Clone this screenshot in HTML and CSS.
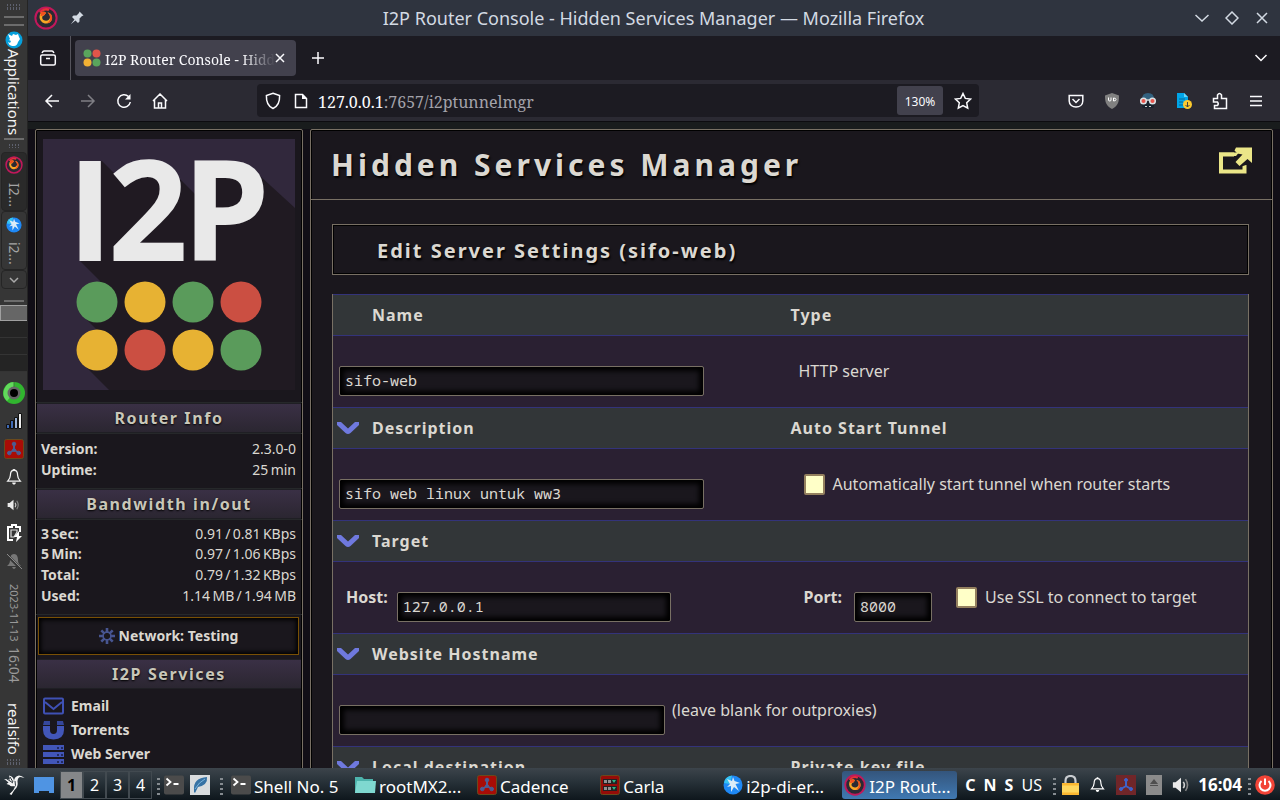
FILE: index.html
```html
<!DOCTYPE html>
<html lang="en">
<head>
<meta charset="utf-8">
<title>I2P Router Console - Hidden Services Manager</title>
<link rel="stylesheet" href="styles.css">
</head>
<body>
<svg class="defs" aria-hidden="true">
  <symbol id="fox" viewBox="0 0 24 24">
    <circle cx="12" cy="12" r="10.6" fill="#2b2a33" stroke="#c2185b" stroke-width="2"/>
    <path d="M6 6.5C8 3.500 12 2.500 15 4" fill="none" stroke="#e8303a" stroke-width="2.400"/>
    <path d="M7 6.500c2-1 4-1 5 .5l-2 2.500c-2 0-2.500 3-.5 4.500 3 2 6.500 0 6.500-3 0-2-1-3.500-2.500-4.500 3.500.5 5 3.500 4.500 6.500-1 5-7.500 6-10.500 2.500C5 13 5 9.500 7 6.500z" fill="#f9a825"/>
    <path d="M13.500 6.500c3.500.5 5 3.500 4.500 6.500-.5 2.500-2.500 4-5 4.300 2.500-2 3.800-3.800 3-6.300-.4-2-1.200-3.500-2.500-4.500zM7 6.500c2-1 4-1 5 .5l-2 2.200-3.500 1z" fill="#f4511e"/>
  </symbol>
  <symbol id="bluebird" viewBox="0 0 20 20">
    <circle cx="10" cy="10" r="9.500" fill="#1e88f5"/>
    <path d="M1 8a9 9 0 0 1 8-7.400L7 9z" fill="#35c3f3"/>
    <path d="M4 4l5 2 1-4 1.500 4L17 8l-4.500 1 3.500 7-5-4-3 5V11l-4 1 3-3z" fill="#dcecf7"/>
  </symbol>
  <symbol id="cadence" viewBox="0 0 20 20">
    <rect x=".5" y=".5" width="19" height="19" rx="2" fill="#a80c06" stroke="#6b4a1c"/>
    <g fill="#4d5b91" stroke="#4d5b91"><circle cx="10" cy="5" r="1.800"/><circle cx="5.300" cy="14" r="1.800"/><circle cx="14.700" cy="14" r="1.800"/><circle cx="10" cy="11" r="1.500"/><path d="M10 5v6l-5 3m5-3l5 3" stroke-width="2" fill="none"/></g>
  </symbol>
  <symbol id="bell" viewBox="0 0 20 20">
    <path d="M10 2.500c-3.500 0-4 3-4 5.500 0 3-1.200 4.500-3 6.500h14c-1.800-2-3-3.500-3-6.500 0-2.500-.5-5.500-4-5.500z" fill="none" stroke="currentColor" stroke-width="1.400"/>
    <path d="M8 16h4c0 3-4 3-4 0zM9 1h2v2H9z" fill="currentColor"/>
  </symbol>
  <symbol id="speaker" viewBox="0 0 20 20">
    <path d="M1 7h3l6-5v16l-6-5H1z" fill="#e9e9e9"/>
    <path d="M12.500 6.500q2.500 3.500 0 7" fill="none" stroke="#cfcfcf" stroke-width="1.800"/>
    <path d="M15 3.500q4.500 6.500 0 13" fill="none" stroke="#858585" stroke-width="1.800"/>
  </symbol>
  <symbol id="terminal" viewBox="0 0 20 20">
    <rect width="20" height="19" rx="2" y=".5" fill="#4b4b4b"/>
    <path d="M2.500 3.500L6.500 7l-4 3.500M9.500 9h5" fill="none" stroke="#fff" stroke-width="1.800"/>
  </symbol>
  <symbol id="chevron" viewBox="0 0 22 12">
    <path d="M0 0h4l7 6.500L18 0h4v3l-8.500 8q-2.500 2-5 0L0 3z" fill="#6f79de"/>
  </symbol>
</svg>

<div class="desktop">
  <aside class="dock">
    <span class="grip"></span>
    <span class="line"></span>
    <span class="line"></span>
    <button class="apps" type="button">
      <svg width="18" height="18" viewBox="0 0 18 18"><circle cx="9" cy="9" r="8.500" fill="#06a0dc"/><path d="M3 3l4 2 1-2 3 1 2-1 1 3 1 2-2 3q-1 4-4 4-4 0-5-2l-1-2 2 1 1-2-2-1 1-1z" fill="#fff"/></svg>
      <span>Applications</span>
    </button>
    <span class="line"></span>
    <span class="grip small"></span>
    <button class="dock-task active" type="button"><svg width="18" height="18"><use href="#fox"/></svg><span>I2...</span></button>
    <button class="dock-task" type="button"><svg width="16" height="16"><use href="#bluebird"/></svg><span>i2...</span></button>
    <button class="dock-more" type="button" aria-label="More windows"><svg width="10" height="8" viewBox="0 0 10 8"><path d="M1 2l4 4 4-4" fill="none" stroke="#aaa" stroke-width="1.500"/></svg></button>
    <span class="line pager-line"></span>
    <div class="dock-pager"><i class="on"></i><i></i><i></i><i></i></div>
    <div class="tray-v">
      <span><svg width="24" height="24" viewBox="0 0 24 24"><circle cx="12" cy="12" r="11" fill="#31b52f"/><path d="M12 1a11 11 0 0 0-7 19l7-8z" fill="#62d95c"/><circle cx="12" cy="12" r="6.500" fill="#666"/><circle cx="12" cy="12" r="4" fill="#000"/><path d="M12 1v5" stroke="#3e7b38"/></svg></span>
      <span><svg width="18" height="18" viewBox="0 0 18 18" stroke="#111"><path d="M1.500 12.500h3v4h-3zM5.500 8.500h3v8h-3z" fill="#3f6ab5"/><path d="M9.500 5.500h3v11h-3z" fill="#9db3d6"/><path d="M13.500 1.500h3v15h-3z" fill="#eee"/></svg></span>
      <span><svg width="20" height="20"><use href="#cadence"/></svg></span>
      <span><svg width="18" height="18"><use href="#bell"/></svg></span>
      <span><svg width="13" height="14"><use href="#speaker"/></svg></span>
      <span><svg width="18" height="18" viewBox="0 0 18 18"><path d="M6 1h5v2h4v5M8 16H3V3h5" fill="none" stroke="#fff" stroke-width="2"/><path d="M6 6h6v2l-3 5H6z" fill="none" stroke="#ddd" stroke-width="1.200"/><path d="M14 7l-5 6h3l-1 5 6-6h-3z" fill="#fff"/></svg></span>
      <span class="muted"><svg width="18" height="18" viewBox="0 0 18 18"><path d="M9 2C6 2 5 5 5 8s-1 4-3 6h14c-2-2-3-3-3-6s-1-6-4-6zM7 15h4q-2 4-4 0z" fill="#777"/><path d="M1 2l15 15" stroke="#363636" stroke-width="3"/><path d="M2 2l15 15" stroke="#8a8a8a"/></svg></span>
    </div>
    <span class="v-date">2023-11-13</span>
    <span class="v-time">16:04</span>
    <span class="v-user">realsifo</span>
    <span class="grip"></span>
  </aside>

  <div class="window">
    <header class="titlebar">
      <svg width="24" height="24"><use href="#fox"/></svg>
      <svg class="pin" width="14" height="14" viewBox="0 0 14 14"><path d="M9.500.5l4 4-1.500.5-2.500 2.500v3L8 12 5.500 9.500.8 13.200 4.500 8.500 2 6l1.500-1.500h3L9 2z" fill="#d3dae3"/></svg>
      <h1>I2P Router Console - Hidden Services Manager — Mozilla Firefox</h1>
      <div class="win-buttons">
        <button type="button" aria-label="Minimize"><svg width="14" height="14" viewBox="0 0 14 14"><path d="M0.500 4L7 10l6.500-6"/></svg></button>
        <button type="button" aria-label="Maximize"><svg width="14" height="14" viewBox="0 0 14 14"><path d="M7 1l6 6-6 6-6-6z"/></svg></button>
        <button type="button" aria-label="Close"><svg width="14" height="14" viewBox="0 0 14 14"><path d="M2 2l10 10M12 2L2 12"/></svg></button>
      </div>
    </header>

    <div class="tabs">
      <button class="view" type="button" aria-label="Recent browsing"><svg width="18" height="18" viewBox="0 0 18 18"><rect x="1.700" y="6" width="14.600" height="10" rx="1.500"/><path d="M3 4q1-2 2-2h8q1 0 2 2M7 9.500h4"/></svg></button>
      <div class="tab">
        <svg width="18" height="18" viewBox="0 0 18 18"><circle cx="4.500" cy="4.500" r="4" fill="#5aa55c"/><circle cx="13.500" cy="4.500" r="4" fill="#e0554a"/><circle cx="4.500" cy="13.500" r="4" fill="#f2b134"/><circle cx="13.500" cy="13.500" r="4" fill="#5aa55c"/></svg>
        <span class="tab-title">I2P Router Console - Hidden</span>
        <button type="button" aria-label="Close tab"><svg width="10" height="10" viewBox="0 0 10 10"><path d="M1 1l8 8M9 1L1 9"/></svg></button>
      </div>
      <button class="new-tab" type="button" aria-label="New tab"><svg width="14" height="14" viewBox="0 0 14 14"><path d="M7 1v12M1 7h12"/></svg></button>
      <button class="all-tabs" type="button" aria-label="List all tabs"><svg width="14" height="14" viewBox="0 0 14 14"><path d="M1.500 4L7 9.500 12.500 4"/></svg></button>
    </div>

    <nav class="toolbar">
      <div class="nav-buttons">
        <button type="button" aria-label="Back"><svg width="16" height="16" viewBox="0 0 16 16"><path d="M15 8H2m6-6L2 8l6 6"/></svg></button>
        <button type="button" aria-label="Forward" disabled><svg width="16" height="16" viewBox="0 0 16 16"><path d="M1 8h13M8 2l6 6-6 6"/></svg></button>
        <button type="button" aria-label="Reload"><svg width="16" height="16" viewBox="0 0 16 16"><path d="M12.500 3.500A6.300 6.300 0 1 0 14.300 9"/><path d="M14.500 1v5.500H9z" fill="#fbfbfe" stroke="none"/></svg></button>
        <button type="button" aria-label="Home"><svg width="16" height="16" viewBox="0 0 16 16"><path d="M1 8l7-7 7 7M2.500 7v8h11V7M6.500 15v-5h3v5"/></svg></button>
      </div>
      <div class="urlbar">
        <svg width="16" height="18" viewBox="0 0 16 18"><path d="M8 1.200L14.600 3.500Q15 13.500 8 16.500 1 13.500 1.400 3.500z"/></svg>
        <svg width="14" height="16" viewBox="0 0 14 16"><path d="M1.500 1.500h7l4 4v9h-11z"/><path d="M8 1v5h5z" fill="#fbfbfe" stroke="none"/></svg>
        <span class="url"><b>127.0.0.1</b>:7657/i2ptunnelmgr</span>
        <button class="zoom" type="button">130%</button>
        <button type="button" aria-label="Bookmark this page"><svg width="18" height="18" viewBox="0 0 18 18"><path d="M9 1.500l2.300 4.900 5.200.7-3.800 3.700 1 5.300L9 13.500l-4.700 2.600 1-5.300L1.500 7.100l5.200-.7z"/></svg></button>
      </div>
      <div class="extensions">
        <button type="button" aria-label="Pocket"><svg width="16" height="16" viewBox="0 0 16 16"><path d="M1.200 2.500h13.600V8c0 8-13.600 8-13.600 0zM4.500 6L8 9.500 11.500 6"/></svg></button>
        <button type="button" aria-label="uBlock Origin"><svg width="16" height="18" viewBox="0 0 16 18"><path d="M8 1l7 2.500c0 7-1 10-7 13.500C2 13.500 1 10.500 1 3.500z" fill="#808080" stroke="none"/><path d="M4.500 5.500V8q0 1 1.300 1T7 8V5.500M9.500 6v3q2.500 0 2.500-1.500T9.500 6" stroke="#fff" stroke-width="1"/></svg></button>
        <button type="button" aria-label="Privacy mask"><svg width="18" height="18" viewBox="0 0 18 18"><path d="M3 7q0-6 6-6t6 6z" fill="#32617f" stroke="none"/><path d="M3 10h12v4q0 2-2 2H5q-2 0-2-2z" fill="#17222d" stroke="none"/><g fill="#e8554d" stroke="#d9e2e5"><circle cx="4.500" cy="9" r="2.800"/><circle cx="13.500" cy="9" r="2.800"/></g><path d="M7 8h4" stroke="#d9e2e5"/><path d="M6 14h2v1H6zm4 0h2v1h-2z" fill="#ccc" stroke="none"/></svg></button>
        <button type="button" aria-label="Download document"><svg width="18" height="18" viewBox="0 0 18 18"><path d="M2 1h7l4 4v11H2z" fill="#00a5e8" stroke="none"/><path d="M9 1v4h4z" fill="#67d4f8" stroke="none"/><path d="M4 7h6M4 10h4M4 13h4" stroke="#086994" stroke-width="1"/><circle cx="12.500" cy="12.500" r="4.500" fill="#fdca2d" stroke="none"/><path d="M12.500 10v5m-2-2l2 2 2-2" stroke="#444" stroke-width="1"/></svg></button>
        <button type="button" aria-label="Extensions"><svg width="16" height="18" viewBox="0 0 16 18"><path d="M1.500 6.500h4V3q2-3 4 0v3.500h5v10h-12v-3h3q1.500-1.700 0-3.500h-4z"/></svg></button>
        <button type="button" aria-label="Menu"><svg width="14" height="14" viewBox="0 0 14 14"><path d="M1 2.500h12M1 7h12M1 11.500h12"/></svg></button>
      </div>
    </nav>

    <div class="page">
      <aside class="sidebar">
        <a class="logo" href="#home" aria-label="I2P">
          <svg viewBox="0 0 252 251">
            <rect width="252" height="251" fill="#31283c"/>
            <path d="M37 122V22h22l14 14 27-11 30 8 22 22 13-25 51 6 36 33v182H66L40 225l14-14 3-17-17-17 14-14 3-21z" fill="#201a22"/>
            <text y="122" class="logo-text"><tspan x="24">I</tspan><tspan x="65">2</tspan><tspan x="139">P</tspan></text>
            <g fill="#5a9b5b"><circle cx="54" cy="163" r="20.500"/><circle cx="150" cy="163" r="20.500"/><circle cx="198" cy="211" r="20.500"/></g>
            <g fill="#e7b233"><circle cx="102" cy="163" r="20.500"/><circle cx="54" cy="211" r="20.500"/><circle cx="150" cy="211" r="20.500"/></g>
            <g fill="#cb4f42"><circle cx="198" cy="163" r="20.500"/><circle cx="102" cy="211" r="20.500"/></g>
          </svg>
        </a>
        <h3>Router Info</h3>
        <dl>
          <div><dt>Version:</dt><dd>2.3.0-0</dd></div>
          <div><dt>Uptime:</dt><dd>25&thinsp;min</dd></div>
        </dl>
        <h3>Bandwidth in/out</h3>
        <dl class="rates">
          <div><dt>3&thinsp;Sec:</dt><dd>0.91&thinsp;/&thinsp;0.81&thinsp;KBps</dd></div>
          <div><dt>5&thinsp;Min:</dt><dd>0.97&thinsp;/&thinsp;1.06&thinsp;KBps</dd></div>
          <div><dt>Total:</dt><dd>0.79&thinsp;/&thinsp;1.32&thinsp;KBps</dd></div>
          <div><dt>Used:</dt><dd>1.14&thinsp;MB&thinsp;/&thinsp;1.94&thinsp;MB</dd></div>
        </dl>
        <p class="network">
          <svg width="16" height="16" viewBox="0 0 16 16"><path d="M8 0v5M8 11v5M0 8h5M11 8h5M2.300 2.300l3.500 3.500M10.200 10.200l3.500 3.500M13.700 2.300l-3.500 3.500M5.800 10.200l-3.500 3.500" stroke="#475590" stroke-width="2.600"/><circle cx="8" cy="8" r="4" fill="none" stroke="#475590"/></svg>
          Network: Testing
        </p>
        <h3>I2P Services</h3>
        <ul class="services">
          <li><a href="#email"><svg width="21" height="18" viewBox="0 0 21 18"><rect x="1" y="1.500" width="19" height="15" rx="1" fill="none" stroke="#3f51b5" stroke-width="2"/><path d="M2 5l8.500 7L19 5" fill="none" stroke="#3f51b5" stroke-width="2"/></svg>Email</a></li>
          <li><a href="#torrents"><svg width="21" height="20" viewBox="0 0 21 20"><path d="M0 6h7v4q0 4 3.500 4t3.500-4V6h7v4q0 9-10.500 9.500Q0 19 0 10z" fill="#4256b9"/><path d="M1 1h6v4H0zM14 1h6l1 4h-7z" fill="#35479c"/></svg>Torrents</a></li>
          <li><a href="#web"><svg width="21" height="19" viewBox="0 0 21 19"><path d="M0 0h21v5H0zM0 7h21v5H0zM0 14h21v5H0z" fill="#4256b9"/><path d="M14 2h2v2h-2zm4 0h2v2h-2zm-4 7h2v2h-2zm4 0h2v2h-2zm-4 7h2v2h-2zm4 0h2v2h-2z" fill="#222b62"/></svg>Web Server</a></li>
        </ul>
      </aside>

      <main class="panel">
        <header class="panel-head">
          <h2>Hidden Services Manager</h2>
          <a href="#popout" aria-label="Open in new tab"><svg width="34" height="28" viewBox="0 0 34 28"><path d="M2 7.500h23.500v17H2z" fill="none" stroke="#ebe688" stroke-width="4"/><path d="M15 0h19v19l-7-1-6 2-6-3z" fill="#1a171d"/><path d="M0 5.500h20l-3 3.500H4v14h-4z" fill="#ebe688"/><path d="M17 0.500h16v15.500l-4.500-4-8 7-4-4 7-7.500-5-1-3-3z" fill="#ebe688"/></svg></a>
        </header>
        <form class="edit" onsubmit="return false">
          <h3 class="edit-title">Edit Server Settings (sifo-web)</h3>
          <table>
            <tr><th><label for="name">Name</label></th><th>Type</th></tr>
            <tr>
              <td><div class="field"><input id="name" class="text wide" type="text" value="sifo-web"></div></td>
              <td><div class="field plain"><span>HTTP server</span></div></td>
            </tr>
            <tr><th><svg width="22" height="12"><use href="#chevron"/></svg><label for="desc">Description</label></th><th>Auto Start Tunnel</th></tr>
            <tr>
              <td><div class="field"><input id="desc" class="text wide" type="text" value="sifo web linux untuk ww3"></div></td>
              <td><div class="field check"><input id="auto" type="checkbox"><label for="auto">Automatically start tunnel when router starts</label></div></td>
            </tr>
            <tr><th colspan="2"><svg width="22" height="12"><use href="#chevron"/></svg>Target</th></tr>
            <tr>
              <td><div class="field target"><label for="host">Host:</label><input id="host" class="text host" type="text" value="127.0.0.1"></div></td>
              <td><div class="field check"><label class="strong" for="port">Port:</label><input id="port" class="text port" type="text" value="8000"><input id="ssl" type="checkbox"><label for="ssl">Use SSL to connect to target</label></div></td>
            </tr>
            <tr><th colspan="2"><svg width="22" height="12"><use href="#chevron"/></svg><label for="site">Website Hostname</label></th></tr>
            <tr>
              <td colspan="2"><div class="field"><input id="site" class="text site" type="text" value=""><span>(leave blank for outproxies)</span></div></td>
            </tr>
            <tr><th><svg width="22" height="12"><use href="#chevron"/></svg>Local destination</th><th>Private key file</th></tr>
          </table>
        </form>
      </main>
    </div>
  </div>

  <footer class="taskbar">
    <div class="launch">
      <button type="button" aria-label="Start menu"><svg width="22" height="22" viewBox="0 0 22 22"><path d="M1 5l6 .5L6 1.500q5 1 5 6 0-5 5-6 3 0 5.500 2.500l-4-1q-2.500 0-3 4 1 6-3 9-1.500 2-3 5l-2-1 3-3q3-3 1-5-3 1-4-1l-3-1 2-1.500-3-2.500z" fill="#f4f4f4"/><path d="M4 5l6 4M7 3l3 5M12 7q2 5-2 8" stroke="#29333b" fill="none"/></svg></button>
      <button type="button" aria-label="Show desktop"><svg width="20" height="18" viewBox="0 0 20 18"><path d="M0 1h20v16h-5v-2H5v2H0z" fill="#4f94e3"/></svg></button>
    </div>
    <div class="pager"><button class="on" type="button">1</button><button type="button">2</button><button type="button">3</button><button type="button">4</button></div>
    <span class="dots"></span>
    <button type="button" aria-label="Terminal"><svg width="20" height="20"><use href="#terminal"/></svg></button>
    <button type="button" aria-label="Editor"><svg width="20" height="20" viewBox="0 0 20 20"><rect width="20" height="20" fill="#d9dcde"/><path d="M4 15Q3 3 17 2q1 8-9 10l-3 6-1-1z" fill="#3672a4"/><path d="M5 14Q9 7 15 4" stroke="#7db5dc" fill="none"/></svg></button>
    <span class="dots"></span>
    <div class="tasks">
      <button type="button"><svg width="20" height="20"><use href="#terminal"/></svg><span>Shell No. 5</span></button>
      <button type="button"><svg width="22" height="18" viewBox="0 0 22 18"><path d="M1 1h7l2 2h9v14H1z" fill="#4db3ac"/><path d="M3 5h19l-1 12H1z" fill="#7fd8d0"/></svg><span>rootMX2...</span></button>
      <button type="button"><svg width="20" height="20"><use href="#cadence"/></svg><span>Cadence</span></button>
      <button type="button"><svg width="20" height="20" viewBox="0 0 20 20"><rect x=".5" y=".5" width="19" height="19" rx="2" fill="#960c08" stroke="#6b4a1c"/><path d="M3 4h14v5H3zM3 11h14v5H3z" fill="#222"/><path d="M4 5h3v3H4zM8 5h3v3H8zM4 12h3v3H4zM8 12h3v3H8z" fill="#909090"/><path d="M12 5h4l-2 3zM12 12h4l-2 3z" fill="#2bb789"/></svg><span>Carla</span></button>
      <button type="button"><svg width="20" height="20"><use href="#bluebird"/></svg><span>i2p-di-er...</span></button>
      <button class="active" type="button"><svg width="22" height="22"><use href="#fox"/></svg><span>I2P Rout...</span></button>
    </div>
    <div class="keys"><b>C</b><b>N</b><b>S</b><span>US</span></div>
    <span class="dots"></span>
    <div class="tray">
      <svg width="17" height="20" viewBox="0 0 17 20"><path d="M3.500 9V6q0-5 5-5t5 5v3" fill="none" stroke="#c9ccd0" stroke-width="2.200"/><path d="M0 8h17v12H0z" fill="#fbb731"/><path d="M0 10.500h17v7H0z" fill="#ffd75e"/></svg>
      <svg width="17" height="18"><use href="#bell"/></svg>
      <svg width="20" height="20" viewBox="0 0 20 20"><path d="M0 0h20v20H0z" fill="#702629"/><g fill="#3f62c9" stroke="#3f62c9"><circle cx="10" cy="5" r="1.500"/><circle cx="5" cy="14" r="1.500"/><circle cx="15" cy="14" r="1.500"/><path d="M10 5v6l-5 3m5-3l5 3" fill="none" stroke-width="2"/></g></svg>
      <svg width="16" height="20" viewBox="0 0 16 20"><path d="M0 0h16v20H0z" fill="#8b8b8b"/><path d="M8 4l4 5H4zM4 10h8v1H4z" fill="#4e4e4e"/></svg>
      <svg width="18" height="18"><use href="#speaker"/></svg>
    </div>
    <time>16:04</time>
    <span class="dots"></span>
    <button type="button" aria-label="Power"><svg width="20" height="20" viewBox="0 0 20 20"><circle cx="10" cy="10" r="9.800" fill="#f24437"/><path d="M6.500 6a5.500 5.500 0 1 0 7 0M10 3.500V10" fill="none" stroke="#fff" stroke-width="2"/></svg></button>
  </footer>
</div>
</body>
</html>
```
FILE: styles.css
```css
* { box-sizing: border-box; }
body { margin: 0; font-family: "Noto Sans", sans-serif; color: #dbd8d1; background: #110e16; }
h1, h2, h3, p, ul, dl, dd { margin: 0; padding: 0; }
button { margin: 0; padding: 0; border: 0; background: none; color: inherit; font: inherit; display: flex; align-items: center; justify-content: center; }
svg { flex: none; display: block; }
a { color: inherit; text-decoration: none; }
.defs { position: absolute; width: 0; height: 0; }

.desktop { display: grid; grid-template: minmax(0, 1fr) 32px / 28px minmax(0, 1fr); height: 100vh; overflow: hidden; }

/* vertical panel */
.dock { background: #363636; border-right: 1px solid #242424; display: flex; flex-direction: column; align-items: center; overflow: hidden; color: #f4f4f4; }
.grip { width: 14px; height: 6px; margin-top: 4px; flex: none; background: linear-gradient(#363636 0 0) 0 2px / 100% 1px no-repeat, repeating-linear-gradient(90deg, #686c7c 0 1px, transparent 1px 3px); opacity: .8; }
.grip.small { width: 10px; height: 4px; margin: 4px 0; }
.line { width: 20px; height: 2px; background: #6c6c6c; margin-top: 6px; flex: none; }
.apps { flex-direction: column; height: 112px; padding-top: 5px; justify-content: flex-start; font-size: 15px; line-height: 18px; flex: none; }
.apps span, .dock-task span, .v-date, .v-time, .v-user { writing-mode: vertical-rl; white-space: nowrap; }
.apps + .line { margin-top: 0; }
.dock-task { flex-direction: column; width: 26px; height: 59px; border: 1px solid #252525; border-radius: 4px; gap: 9px; color: #a4a4a4; font-size: 14px; line-height: 18px; flex: none; }
.dock-task.active { background: #2a2a2a; }
.dock-more { width: 26px; height: 19px; border: 1px solid #252525; border-radius: 4px; flex: none; }
.pager-line { margin-top: 11px; }
.dock-pager { width: 28px; margin-top: 3px; background: #242424; flex: none; }
.dock-pager i { display: block; height: 17px; border-bottom: 1px solid #343434; }
.dock-pager .on { height: 16px; background: #666; border: 1px solid #a0a0a0; }
.tray-v { margin-top: 7px; }
.tray-v span { display: flex; align-items: center; justify-content: center; height: 28px; }
.v-date { height: 66px; padding-top: 9px; font-size: 11px; line-height: 16px; color: #999; flex: none; }
.v-time { height: 50px; padding-top: 6px; font-size: 14px; line-height: 18px; color: #999; flex: none; }
.v-user { height: 64px; padding-top: 12px; font-size: 15px; line-height: 18px; flex: none; }

/* browser chrome */
.window { display: flex; flex-direction: column; min-height: 0; }
.titlebar { display: flex; align-items: center; height: 36px; padding: 0 11px 0 6px; background: #2f343f; color: #d3dae3; flex: none; }
.pin { margin-left: 12px; }
.titlebar h1 { flex: 1; font-size: 18px; font-weight: 400; line-height: 24px; text-align: center; white-space: nowrap; padding-left: 28px; }
.win-buttons { display: flex; gap: 16px; }
.window svg { stroke-width: 1.500; }
.win-buttons svg, .tabs button svg, .toolbar svg { fill: none; stroke: #fbfbfe; }
.win-buttons svg { stroke: #d3dae3; }
.tabs { display: flex; align-items: center; height: 44px; background: #1c1b22; padding-right: 12px; flex: none; }
.view { width: 43px; height: 44px; padding-right: 3px; border-right: 1px solid #55545c; }
.tab { display: flex; align-items: center; width: 221px; height: 36px; margin-left: 4px; padding: 0 11px 0 8px; background: #42414d; border-radius: 4px; color: #fbfbfe; }
.tab > svg { stroke: none; }
.tab-title { flex: 1; margin-left: 4px; overflow: hidden; white-space: nowrap; font: 14px/20px "Noto Serif", "DejaVu Serif", serif; padding-top: 3px; -webkit-mask-image: linear-gradient(90deg, #000 80%, transparent); mask-image: linear-gradient(90deg, #000 80%, transparent); }
.new-tab { margin-left: 15px; }
.all-tabs { margin-left: auto; }
.toolbar { display: flex; align-items: center; height: 42px; background: #2b2a33; border-bottom: 1px solid #0d0c10; flex: none; }
.nav-buttons { display: flex; gap: 20px; padding-left: 16px; width: 229px; }
.nav-buttons button:disabled { opacity: .4; }
.urlbar { display: flex; align-items: center; flex: 1; height: 33px; padding: 0 7px 0 8px; background: #1c1b22; border-radius: 4px; }
.urlbar svg + svg { margin-left: 13px; }
.url { flex: 1; margin-left: 10px; color: #a3a2aa; font: 16px/20px "Noto Serif", "DejaVu Serif", serif; padding-top: 2px; }
.url b { color: #fbfbfe; font-weight: 400; }
.zoom { width: 46px; height: 29px; margin-right: 11px; padding-top: 2px; background: #42414d; border-radius: 3px; color: #fbfbfe; font-size: 12px; }
.extensions { display: flex; justify-content: space-between; width: 301px; padding: 0 15px 0 88px; }
.extensions button { width: 18px; }

/* router console */
.page { flex: 1; min-height: 0; display: flex; gap: 7px; align-items: flex-start; padding: 7px 7px 0; overflow: hidden; background: linear-gradient(#191c1d 0 7px, #110e16 7px); }
.sidebar, .panel { border: 1px solid #787064; border-radius: 2px; background: #1a171d; box-shadow: inset 0 0 0 1px #000; height: 900px; }
.sidebar { width: 268px; flex: none; font-size: 14px; line-height: 20px; }
.logo { display: block; padding: 9px 7px 12px; border-bottom: 1px solid #26282a; }
.logo svg { width: 100%; }
.logo-text { font: 700 140px "Open Sans", sans-serif; fill: #e9e9e9; stroke: none; }
.sidebar h3 { margin: 0 1px; height: 30px; border: 1px solid #1f1f24; border-width: 1px 0; background: linear-gradient(#3a3045, #2b2631); color: #c9c7b9; font-size: 16px; line-height: 28px; letter-spacing: 0.1em; text-align: center; text-shadow: 0 1px 2px #000; }
.sidebar dl { padding: 4px 6px 8px 5px; border: 1px solid #26282a; border-width: 1px 0; }
.sidebar dl div { display: flex; justify-content: space-between; line-height: 21px; }
.sidebar .rates { padding-bottom: 7px; }
.sidebar .rates div { line-height: 20px; margin-bottom: 1px; }
.sidebar .rates div:first-child { margin-bottom: 0; }
.sidebar dt { font-weight: 700; }
.network { display: flex; align-items: center; justify-content: center; gap: 4px; height: 38px; margin: 2px 3px 4px 2px; border: 1px solid #795005; box-shadow: inset 0 0 4px 2px #000; font-weight: 700; }
.services { list-style: none; padding: 5px 7px; }
.services a { display: flex; align-items: center; gap: 7px; height: 24px; font-weight: 700; }

.panel { flex: 1; }
.panel-head { display: flex; align-items: center; justify-content: space-between; height: 70px; padding: 0 19px 8px 20px; border-bottom: 1px solid #787064; }
.panel-head h2 { font-size: 30px; line-height: 40px; padding-top: 8px; letter-spacing: 4px; text-shadow: 1px 2px 2px #000; }
.edit { padding: 24px 23px 0 21px; }
.edit-title { height: 51px; margin-bottom: 19px; padding: 2px 44px 0; border: 1px solid #787064; box-shadow: inset 0 0 0 1px #000; font-size: 20px; line-height: 48px; letter-spacing: 2px; text-shadow: 1px 2px 2px #000; }
table { width: 100%; table-layout: fixed; border-spacing: 0; border: 1px solid #787064; border-width: 0 1px; font-size: 16px; line-height: 22px; }
th, td { padding: 0; text-align: left; }
th { height: 42px; background: #323638; border: 1px solid #33337a; border-width: 1px 0; letter-spacing: 1px; }
th:first-child { padding-left: 39px; }
th svg { float: left; margin: 5px 0 0 -35px; }
td { height: 71px; background: #2a2032; }
.field { display: flex; align-items: center; padding-left: 6px; }
.field label, .field span { padding-bottom: 2px; }
.field.plain { padding-left: 8px; }
.field.check { padding-left: 13px; }
.field.target { padding-left: 13px; }
.target label, .strong { font-weight: 700; }
.text { height: 30px; margin: 19px 0 0; padding: 0 5px 2px; border: 1px solid #787064; border-radius: 2px; background: #1a171d; box-shadow: inset 0 0 5px 4px #000; color: #dbd8d1; font: 15px/20px "Noto Sans Mono", "DejaVu Sans Mono", monospace; }
.wide { width: 365px; }
.host { width: 274px; margin-left: 9px; }
.port { width: 78px; margin: 19px 24px 0 12px; }
.site { width: 326px; margin-right: 7px; }
input[type="checkbox"] { appearance: none; width: 21px; height: 21px; margin: 0 8px 0 0; border: 2px solid #94805f; border-radius: 2px; background: #ffffc8; }

/* bottom taskbar */
.taskbar { grid-column: 1 / -1; display: flex; align-items: center; padding: 2px 5px 0 3px; background: linear-gradient(#3c444b, #29333a 40%, #0e161c); color: #fff; font-size: 16px; line-height: 22px; }
.launch { display: flex; gap: 9px; width: 57px; }
.pager { display: flex; width: 92px; height: 28px; margin-right: 1px; }
.pager button { flex: 1; border: 1px solid #424a50; }
.pager .on { background: #858789; color: #000; font-weight: 700; }
.dots { width: 3px; height: 19px; background: repeating-linear-gradient(transparent 0 2px, #858b90 2px 4px, transparent 4px 5px); flex: none; margin: 0 4px; }
.taskbar > button { margin-right: 6px; }
.tasks { flex: 1; display: grid; grid-template-columns: repeat(6, minmax(0, 1fr)); height: 28px; }
.tasks button { justify-content: flex-start; gap: 3px; padding-left: 4px; white-space: nowrap; overflow: hidden; margin-right: 8px; font-size: 17px; }
.tasks span { padding-top: 4px; }
.tasks .active { padding-left: 2px; background: linear-gradient(#34557c, #4079b2); border-radius: 3px; }
.keys { display: flex; gap: 8px; width: 84px; }
.tray { display: flex; align-items: center; gap: 10px; margin-left: 2px; }
.taskbar time { margin: 0 2px 0 8px; font-size: 17px; font-weight: 700; }
.taskbar > button:last-child { margin-right: 0; }
```
